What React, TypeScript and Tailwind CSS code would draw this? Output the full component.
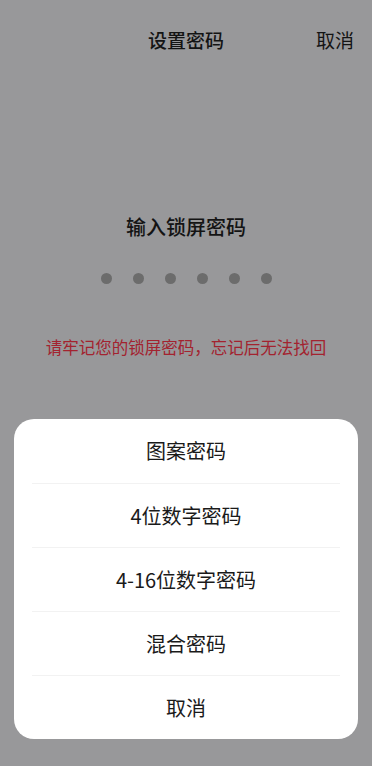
import React from "react";

const options = ["图案密码", "4位数字密码", "4-16位数字密码", "混合密码", "取消"];

export default function App() {
  return (
    <div
      className="w-[372px] h-[766px] bg-[#98989a] flex flex-col overflow-hidden"
      style={{ fontFamily: '"Noto Sans CJK SC", "Noto Sans", sans-serif' }}
    >
      <div className="h-[80px] grid grid-cols-[1fr_auto_1fr] items-center">
        <div />
        <div className="text-[19px] leading-[28px] font-medium text-[#141414]">设置密码</div>
        <div className="flex justify-end pr-[18px] text-[19px] leading-[28px] text-[#141414]">取消</div>
      </div>
      <div className="mt-[133px] text-center text-[20px] leading-[28px] font-medium text-[#141414]">
        输入锁屏密码
      </div>
      <div className="mt-[32px] flex justify-center gap-[21px]">
        {[0, 1, 2, 3, 4, 5].map((i) => (
          <div key={i} className="w-[11px] h-[11px] rounded-full bg-[#6c6c6c]" />
        ))}
      </div>
      <div className="mt-[53px] text-center text-[16.5px] leading-[20px] text-[#a3232f]">
        请牢记您的锁屏密码，忘记后无法找回
      </div>
      <div className="mt-[62px] mx-[14px] bg-white rounded-[20px] flex flex-col">
        {options.map((o, i) => (
          <div key={o} className="flex flex-col">
            {i > 0 && <div className="mx-[18px] h-px bg-[#f2f2f2]" />}
            <div className={`${i === 0 ? "h-[64px]" : "h-[63px]"} flex items-center justify-center text-[20px] text-[#1a1a1a]`}>
              {o}
            </div>
          </div>
        ))}
      </div>
    </div>
  );
}
